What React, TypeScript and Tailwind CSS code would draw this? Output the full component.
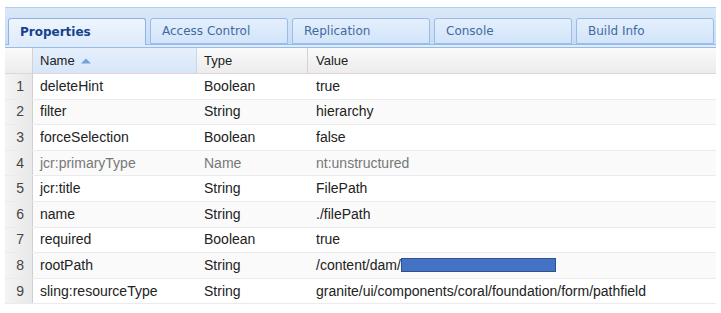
import React from "react";

const tabs = ["Properties", "Access Control", "Replication", "Console", "Build Info"];

const rows: { name: string; type: string; value: string; dim?: boolean; redact?: boolean }[] = [
  { name: "deleteHint", type: "Boolean", value: "true" },
  { name: "filter", type: "String", value: "hierarchy" },
  { name: "forceSelection", type: "Boolean", value: "false" },
  { name: "jcr:primaryType", type: "Name", value: "nt:unstructured", dim: true },
  { name: "jcr:title", type: "String", value: "FilePath" },
  { name: "name", type: "String", value: "./filePath" },
  { name: "required", type: "Boolean", value: "true" },
  { name: "rootPath", type: "String", value: "/content/dam/", redact: true },
  { name: "sling:resourceType", type: "String", value: "granite/ui/components/coral/foundation/form/pathfield" },
];

export default function App() {
  return (
    <div className="w-[721px] h-[313px] bg-white pt-[7px] pl-[5px] pr-[5px] overflow-hidden">
      {/* Tab strip */}
      <div className="bg-gradient-to-b from-[#dae8f8] to-[#c8ddf5] border-t border-[#b4cdee] pt-[10px] pl-[3px]">
        <div className="flex gap-[4px] h-[26px] items-end">
          {tabs.map((t, i) =>
            i === 0 ? (
              <div
                key={t}
                className="w-[138px] h-[27px] -mb-[1px] relative z-10 rounded-t-[3px] border border-b-0 border-[#8db2e3] bg-gradient-to-b from-[#eef5fd] to-[#deebfb] pl-[11px] flex items-center"
                style={{ fontFamily: '"DejaVu Sans", sans-serif' }}
              >
                <span className="text-[12px] font-bold text-[#15428b]">{t}</span>
              </div>
            ) : (
              <div
                key={t}
                className="w-[138px] h-[26px] rounded-t-[3px] border border-[#99bbe8] bg-gradient-to-b from-[#e4effc] to-[#d3e5fa] pl-[11px] flex items-center"
                style={{ fontFamily: '"DejaVu Sans", sans-serif' }}
              >
                <span className="text-[12px] text-[#416aa3]">{t}</span>
              </div>
            )
          )}
        </div>
      </div>
      <div className="h-[4px] border-t border-b border-[#99bbe8] bg-[#deecfd]" />

      {/* Grid */}
      <div style={{ fontFamily: '"Liberation Sans", Arial, sans-serif' }}>
        {/* Header */}
        <div className="flex h-[26px] bg-gradient-to-b from-[#fafafa] to-[#ececec] border-b border-[#e2d3d8] text-[13px] text-[#222]">
          <div className="w-[28px] border-r border-[#d3d3d3]" />
          <div className="w-[164px] bg-gradient-to-b from-[#e6f0fc] to-[#d6e6fa] border-r border-[#c9d6e6] flex items-center pl-[7px]">
            Name
            <svg width="10" height="6" viewBox="0 0 10 6" className="ml-[6px]">
              <path d="M0 5.5 L5 0.5 L10 5.5 Z" fill="#6ea3dc" />
            </svg>
          </div>
          <div className="w-[111px] border-r border-[#d3d3d3] flex items-center pl-[7px]">Type</div>
          <div className="flex-1 flex items-center pl-[8px]">Value</div>
        </div>

        {/* Rows */}
        {rows.map((r, i) => (
          <div
            key={r.name}
            className={`flex h-[25.6px] border-b border-[#ebebeb] text-[14px] ${
              i % 2 === 1 ? "bg-[#fafafa]" : "bg-white"
            } ${r.dim ? "text-[#777]" : "text-[#222]"}`}
          >
            <div className="w-[28px] bg-gradient-to-r from-[#f4f4f4] to-[#e8e8e8] border-r border-[#d0d0d0] flex items-center justify-end pr-[8px] text-[#444]">
              {i + 1}
            </div>
            <div className="w-[164px] flex items-center pl-[7px]">{r.name}</div>
            <div className="w-[111px] flex items-center pl-[7px]">{r.type}</div>
            <div className="flex-1 flex items-center pl-[8px] whitespace-nowrap">
              {r.value}
              {r.redact && (
                <span className="inline-block w-[155px] h-[14px] bg-[#4472c4] border border-[#2f528f]" />
              )}
            </div>
          </div>
        ))}
      </div>
    </div>
  );
}
